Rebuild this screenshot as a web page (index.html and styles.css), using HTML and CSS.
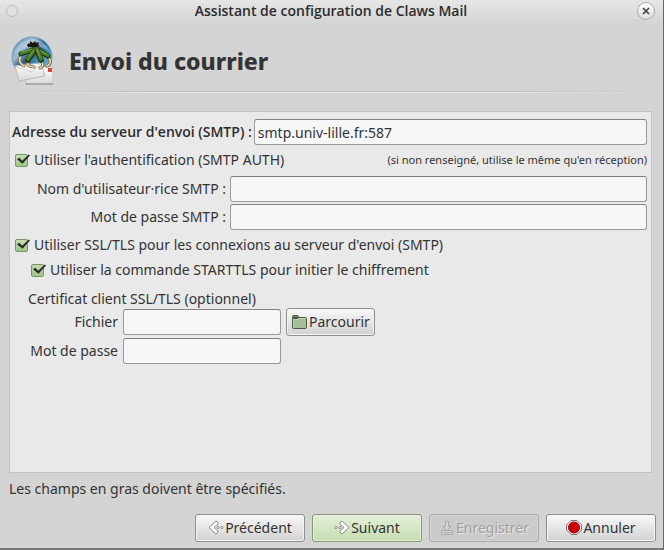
FILE: index.html
```html
<!DOCTYPE html>
<html lang="fr">
<head>
<meta charset="utf-8">
<title>Assistant de configuration de Claws Mail</title>
<link rel="stylesheet" href="styles.css">
</head>
<body>
<form class="window">
  <header class="titlebar">
    <button type="button" class="menu-dot" aria-label="Menu"></button>
    <div class="title">Assistant de configuration de Claws Mail</div>
    <button type="button" class="close" aria-label="Fermer">
      <svg width="16" height="16" viewBox="0 0 16 16"><path d="M5 5l6 6M11 5l-6 6" stroke="#444" stroke-width="1.7"/></svg>
    </button>
  </header>
  <div class="heading">
    <svg class="logo" width="44" height="50" viewBox="0 0 44 50">
      <defs>
        <linearGradient id="globe" x1="0" y1="0" x2="1" y2="1"><stop offset="0" stop-color="#5b83a8"/><stop offset=".3" stop-color="#9dbbd3"/><stop offset=".45" stop-color="#2c6291"/><stop offset=".7" stop-color="#4f9fc9"/><stop offset="1" stop-color="#9bdcf1"/></linearGradient>
        <linearGradient id="paper" x1="0" y1="0" x2="0" y2="1"><stop offset="0" stop-color="#fff"/><stop offset="1" stop-color="#d8d8d8"/></linearGradient>
      </defs>
      <circle cx="21" cy="21" r="20" fill="url(#globe)" stroke="#6d9cba" stroke-width="1"/>
      <path d="M4 15Q10 4 21 3Q33 3 38 15Q30 9 21 11Q11 10 4 18Z" fill="#c6d9e6" opacity=".5"/>
      <path d="M15 31h27v17H15z" fill="url(#paper)" stroke="#c4c4c4"/>
      <path d="M15 48h27" stroke="#888"/>
      <path d="M4 30l26-3 4 13-26 5z" fill="url(#paper)" stroke="#bbb"/>
      <path d="M5 31l16 5 9-9" fill="none" stroke="#d0d0d0"/>
      <path d="M37 32h4v4h-4z" fill="#d9473a"/>
      <g fill="none" stroke-linecap="round" stroke-linejoin="round">
        <path d="M10 20Q6 26 13 30M17 25Q15 31 23 31M30 25Q34 30 29 32M37 21Q42 27 36 30" stroke="#7a6036" stroke-width="3"/>
        <path d="M10 20Q6 26 13 30M17 25Q15 31 23 31M30 25Q34 30 29 32M37 21Q42 27 36 30" stroke="#ecdcb4" stroke-width="1.600"/>
        <path d="M24 13L10 18" stroke="#1f3510" stroke-width="5"/><path d="M24 13L10 17.500" stroke="#4d7d28" stroke-width="3.200"/>
        <path d="M27 14l10 6" stroke="#1f3510" stroke-width="5"/><path d="M27 14l10 5.500" stroke="#4d7d28" stroke-width="3.200"/>
        <path d="M24 14l-7 10" stroke="#1f3510" stroke-width="5.500"/><path d="M24 13l-7 10" stroke="#4d7d28" stroke-width="3.600"/>
        <path d="M26 14l4 10" stroke="#1f3510" stroke-width="5.500"/><path d="M26 13l4 10" stroke="#4d7d28" stroke-width="3.600"/>
        <path d="M20 13l-9 3M23 14l-6 7M26 14l3 7M30 15l5 3" stroke="#7ea04b" stroke-width="1"/>
      </g>
      <path d="M16 9l2-2 1 1 0-3 3 2 2-2 1 2 3-1-1 3 2 1-3 1-9 0z" fill="#17180f"/>
    </svg>
    <h1>Envoi du courrier</h1>
  </div>
  <hr class="rule">
  <main class="panel">
    <div class="field">
      <label class="strong" for="server">Adresse du serveur d'envoi (SMTP) :</label>
      <input class="entry grow" id="server" type="text" value="smtp.univ-lille.fr:587">
    </div>
    <div class="option">
      <input type="checkbox" id="auth" checked>
      <label for="auth">Utiliser l'authentification (SMTP AUTH)</label>
      <small>(si non renseigné, utilise le même qu'en réception)</small>
    </div>
    <div class="credentials">
      <label for="user">Nom d'utilisateur·rice SMTP :</label>
      <input class="entry" id="user" type="text">
      <label for="password">Mot de passe SMTP :</label>
      <input class="entry" id="password" type="password">
    </div>
    <div class="option">
      <input type="checkbox" id="ssl" checked>
      <label for="ssl">Utiliser SSL/TLS pour les connexions au serveur d'envoi (SMTP)</label>
    </div>
    <div class="option nested">
      <input type="checkbox" id="starttls" checked>
      <label for="starttls">Utiliser la commande STARTTLS pour initier le chiffrement</label>
    </div>
    <fieldset class="certificate">
      <legend>Certificat client SSL/TLS (optionnel)</legend>
      <div class="cert-grid">
        <label for="file">Fichier</label>
        <input class="entry" id="file" type="text">
        <button type="button" class="btn browse">
          <svg width="17" height="16" viewBox="0 0 17 16"><path d="M1.500 2.500q0-1 1-1h4q1 0 1 1v1h-6z" fill="#6f8f68" stroke="#46583f"/><path d="M1.500 4.500h5l1-1h7q1 0 1 1v9q0 1-1 1h-12q-1 0-1-1z" fill="#a3bf98" stroke="#46583f"/><path d="M2.500 13V5.500h4.500l1-1h6.500" fill="none" stroke="#c0d4b7"/></svg>Parcourir
        </button>
        <label for="certpass">Mot de passe</label>
        <input class="entry" id="certpass" type="password">
      </div>
    </fieldset>
  </main>
  <p class="note">Les champs en gras doivent être spécifiés.</p>
  <footer class="actions">
    <button type="button" class="btn">
      <svg width="16" height="16" viewBox="0 0 16 16" fill="#fff" stroke="#808080" stroke-width=".9"><path d="M8 1L1 7.500 8 14l2-1.500v-1.500L6 7.500 10 4V2.500z"/><circle cx="10" cy="7.500" r="1.100"/><circle cx="14" cy="7.500" r="1.100"/></svg>Précédent
    </button>
    <button type="submit" class="btn primary">
      <svg width="16" height="16" viewBox="0 0 16 16" fill="#fff" stroke="#808080" stroke-width=".9"><path d="M8 1l7 6.500L8 14l-2-1.500v-1.500l4-3.500L6 4V2.500z"/><circle cx="2" cy="7.500" r="1.100"/><circle cx="6" cy="7.500" r="1.100"/></svg>Suivant
    </button>
    <button type="button" class="btn" disabled>
      <svg width="16" height="16" viewBox="0 0 16 16" fill="#d4d4d4" stroke="#aaa"><path d="M2.500 10.500h11v4h-11z"/><path d="M6.500 1.500q1.500-1 3 0v5h2.500L8 10.500 4 6.500h2.500z"/><path d="M4 12.500h8"/></svg>Enregistrer
    </button>
    <button type="button" class="btn">
      <svg width="16" height="16" viewBox="0 0 16 16"><path d="M5 .5h6L15.500 5v5L11 14.500H5L.5 10V5z" fill="#eee" stroke="#777"/><circle cx="8" cy="7.500" r="5.500" fill="#c00" stroke="#a00000"/></svg>Annuler
    </button>
  </footer>
</form>
</body>
</html>
```
FILE: styles.css
```css
* { box-sizing: border-box; }

body {
  margin: 0;
  background: #d4d4d4;
  color: #333;
  font: 14px/20px "Noto Sans", sans-serif;
}

.window {
  display: flex;
  flex-direction: column;
  min-height: 100vh;
  border-right: 1px solid #666;
  border-bottom: 2px solid #777;
  background: linear-gradient(#e6e6e6, #d4d4d4 24px);
}

input, button { font: inherit; color: inherit; margin: 0; }
svg { flex: none; }

.titlebar {
  display: grid;
  grid-template-columns: 20px 1fr 20px;
  align-items: center;
  height: 22px;
  padding: 0 6px 0 5px;
}

.title, .strong { font-family: "Open Sans", sans-serif; font-weight: 600; color: #2c2c2c; }
.title { text-align: center; }

.menu-dot, .close {
  padding: 0;
  border: 1px solid #aaa;
  border-radius: 50%;
  background: linear-gradient(#fff, #ddd);
}

.menu-dot { width: 12px; height: 12px; margin-left: 1px; border-color: #bbb; background: #e2e2e2; }

.close {
  display: grid;
  place-items: center;
  width: 18px;
  height: 18px;
}

.heading {
  display: flex;
  align-items: center;
  gap: 14px;
  height: 70px;
  padding: 8px 11px 0;
}

h1 { margin: 0; font-size: 23px; line-height: 32px; font-weight: 800; }

.rule {
  width: calc(100% - 24px);
  height: 2px;
  margin: -1px 12px 0;
  border: 0;
  background: linear-gradient(90deg, transparent, #c2c2c2 20%, #c2c2c2 80%, transparent) top / 100% 1px no-repeat,
    linear-gradient(90deg, transparent, #e2e2e2 20%, #e2e2e2 80%, transparent) bottom / 100% 1px no-repeat;
}

.panel {
  flex: 1;
  margin: 18px 11px 0 9px;
  padding: 7px 4px 0 2px;
  border: 1px solid #c4c4c4;
  background: #e9e9e9;
}

.field { display: flex; align-items: center; gap: 2px; }
.strong { white-space: nowrap; }
.grow { flex: 1; }

.entry {
  min-width: 0;
  height: 26px;
  padding: 0 3px;
  border: 1px solid #999;
  border-top-color: #808080;
  border-radius: 3px;
  background: #f7f7f7;
}

.option {
  display: flex;
  align-items: center;
  gap: 6px;
  height: 30px;
  padding-left: 3px;
}

.option.nested { height: 20px; padding-left: 19px; }
.option small { margin-left: auto; font-size: 11px; }

input[type="checkbox"] {
  position: relative;
  appearance: none;
  width: 13px;
  height: 13px;
  border: 1px solid #78946a;
  border-radius: 2px;
  background: linear-gradient(#c4dcb1, #9fc587);
}

input[type="checkbox"]:checked::after {
  content: "";
  position: absolute;
  inset: -1px -3px 1px 1px;
  background: #282828;
  clip-path: polygon(0 52%, 17% 38%, 40% 66%, 90% 8%, 100% 18%, 42% 94%);
}

.credentials {
  display: grid;
  grid-template-columns: 214px 1fr;
  gap: 2px 4px;
  align-items: center;
  margin-top: 1px;
}

.credentials label, .cert-grid label { text-align: right; }

.certificate { margin: 10px 0 0; padding: 0 0 0 16px; border: 0; }
.certificate legend { padding: 0; line-height: 18px; }

.cert-grid {
  display: grid;
  grid-template-columns: 90px 158px max-content;
  gap: 2px 5px;
  align-items: center;
}

.btn {
  display: flex;
  align-items: center;
  justify-content: center;
  gap: 1px;
  height: 28px;
  padding: 0;
  border: 1px solid #8f8f8f;
  border-radius: 3px;
  background: linear-gradient(#f8f8f8, #d2d2d2);
  box-shadow: inset 0 0 0 1px #f4f4f4;
}

.browse { padding: 0 4px; }

.primary {
  border-color: #839b76;
  background: linear-gradient(#e4efd9, #c5ddb0);
  box-shadow: inset 0 0 0 1px #e6f0dd;
}

.btn:disabled {
  border-color: #aaa;
  background: #cbcbcb;
  box-shadow: inset 0 0 0 1px #d5d5d5;
  color: #a0a0a0;
  text-shadow: 1px 1px #e8e8e8;
}

.note { margin: 6px 9px 15px; }

.actions {
  display: grid;
  grid-template-columns: repeat(4, 110px);
  justify-content: end;
  gap: 7px;
  padding: 0 7px 6px;
}
```
